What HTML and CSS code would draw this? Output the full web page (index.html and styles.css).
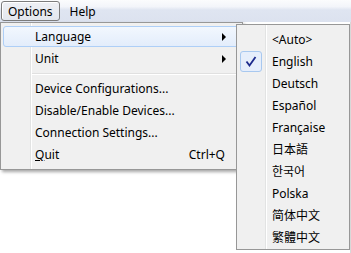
FILE: index.html
```html
<!doctype html>
<html>
<head>
<meta charset="utf-8">
<title>Options</title>
<link rel="stylesheet" href="styles.css">
</head>

<body>
<div id="window">
	<div class="menubar">
		<span class="top-item open">Options</span>
		<span class="top-item">Help</span>
	</div>

	<ul class="menu main-menu">
		<li class="item hover"><span>Language</span><i class="arrow"></i></li>
		<li class="item"><span>Unit</span><i class="arrow"></i></li>
		<li class="sep"></li>
		<li class="item"><span>Device Configurations...</span></li>
		<li class="item"><span>Disable/Enable Devices...</span></li>
		<li class="item"><span>Connection Settings...</span></li>
		<li class="item"><span><u>Q</u>uit</span><em>Ctrl+Q</em></li>
	</ul>

	<ul class="menu sub-menu">
		<li class="item"><span>&lt;Auto&gt;</span></li>
		<li class="item checked">
			<b class="check"><svg width="12" height="11" viewBox="0 0 12 11"><path d="M1.5 5.5 L4.5 9.5 L10.5 1" fill="none" stroke="#1d2a8c" stroke-width="1.8"/></svg></b>
			<span>English</span>
		</li>
		<li class="item"><span>Deutsch</span></li>
		<li class="item"><span>Español</span></li>
		<li class="item"><span>Française</span></li>
		<li class="item cjk"><span>日本語</span></li>
		<li class="item cjk"><span>한국어</span></li>
		<li class="item"><span>Polska</span></li>
		<li class="item cjk"><span>简体中文</span></li>
		<li class="item cjk"><span>繁體中文</span></li>
	</ul>
	<div class="edge"></div>
</div>
</body>
</html>
```

FILE: styles.css
```css
body {
	margin: 0;
	background: #FFF;
	font: 12px/22px "Noto Sans", "Noto Sans CJK SC", sans-serif;
	color: #000;
}
ul {
	list-style: none;
	margin: 0;
	padding: 0;
}
#window {
	position: relative;
	width: 351px;
	height: 253px;
	overflow: hidden;
}
.menubar {
	height: 22px;
	display: flex;
	align-items: center;
	background: linear-gradient(to bottom, #fbfcfd 0, #f3f5fa 30%, #dfe5f1 45%, #dce2ef 100%);
}
.top-item {
	height: 20px;
	line-height: 19px;
	padding: 0 7px;
	margin-right: 2px;
	box-sizing: border-box;
	border: 1px solid transparent;
}
.top-item.open {
	margin-left: 1px;
	padding: 0 6px;
	border-color: #7c7c7c;
	border-radius: 3px;
	background: linear-gradient(to bottom, #eef0f4, #e3e7ee);
	box-shadow: inset 1px 1px 0 #fff;
}
.menu {
	position: absolute;
	background: #F0F0F0;
	border: 1px solid #979797;
	box-sizing: border-box;
}
.main-menu {
	left: 0;
	top: 22px;
	width: 243px;
	padding: 3px 2px 3px 2px;
	box-shadow: 2px 2px 3px rgba(0, 0, 0, .35);
	background: linear-gradient(to right, #F0F0F0 29px, #E2E3E3 29px, #E2E3E3 30px, #FFF 30px, #FFF 31px, #F0F0F0 31px);
}
.sub-menu {
	left: 236px;
	top: 24px;
	width: 114px;
	padding: 4px 2px 0 2px;
	background: linear-gradient(to right, #F0F0F0 28px, #E2E3E3 28px, #E2E3E3 29px, #FFF 29px, #FFF 30px, #F0F0F0 30px);
	z-index: 2;
}
.item {
	position: relative;
	height: 22px;
	display: flex;
	align-items: center;
	padding-left: 32px;
	padding-right: 15px;
	white-space: nowrap;
}
.sub-menu .item {
	padding-left: 33px;
}
.item span {
	flex: 1;
}
.item em {
	font-style: normal;
}
.item.hover::before {
	content: "";
	position: absolute;
	left: 0;
	top: 0;
	right: -8px;
	height: 21px;
	box-sizing: border-box;
	border: 1px solid #aecff7;
	border-radius: 3px;
	background: linear-gradient(to bottom, #f2f7fe, #e3edfb);
}
.item span, .item em, .item .arrow {
	position: relative;
}
.arrow {
	width: 0;
	height: 0;
	border-left: 4px solid #000;
	border-top: 4px solid transparent;
	border-bottom: 4px solid transparent;
	margin-right: -1px;
}
.sep {
	height: 8px;
	margin-left: 29px;
	background: linear-gradient(to bottom, transparent 3px, #E0E0E0 3px, #E0E0E0 4px, #FFF 4px, #FFF 5px, transparent 5px);
}
.check {
	position: absolute;
	left: 1px;
	top: 0;
	width: 22px;
	height: 21px;
	box-sizing: border-box;
	border: 1px solid #a8c8ef;
	border-radius: 3px;
	background: #e6eefb;
	display: flex;
	align-items: center;
	justify-content: center;
}
.check svg {
	display: block;
}
.edge {
	position: absolute;
	right: 0;
	top: 22px;
	width: 1px;
	height: 231px;
	background: #d8d8d8;
}
```
